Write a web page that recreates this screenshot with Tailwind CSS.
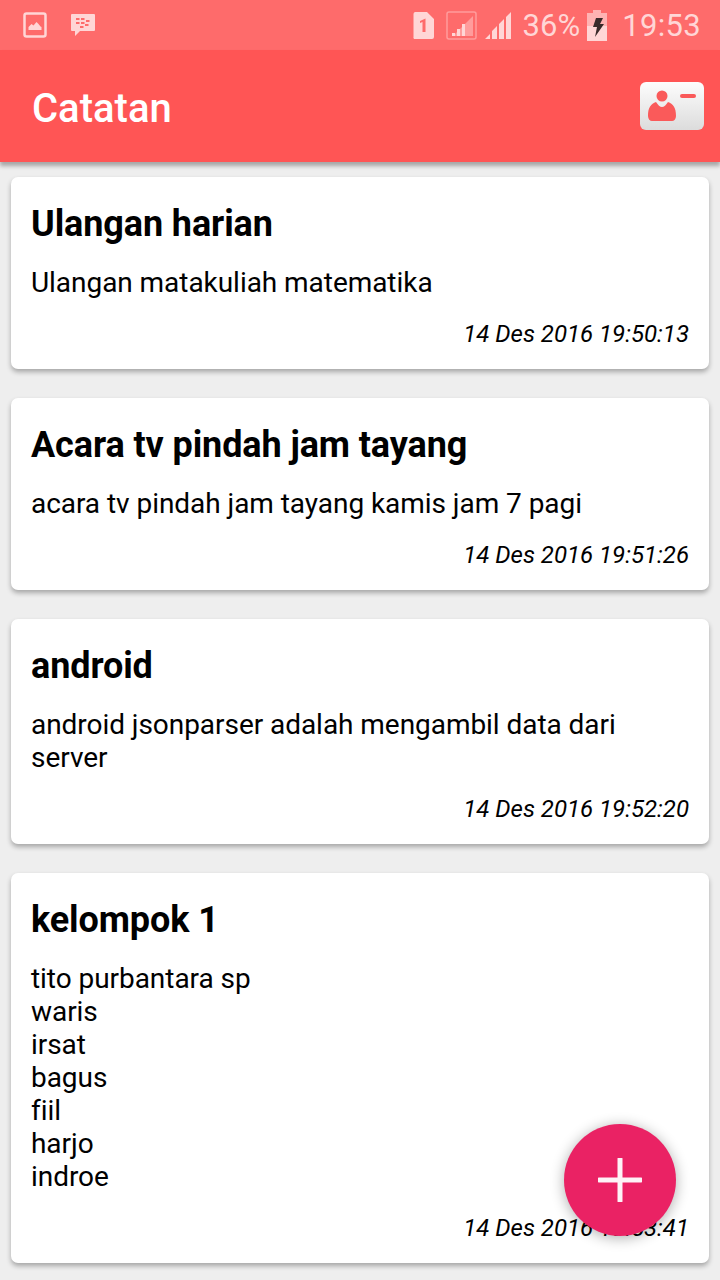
<!DOCTYPE html>
<html><head><meta charset="utf-8">
<script src="https://cdn.jsdelivr.net/npm/@tailwindcss/browser@4"></script>
</head>
<body class="m-0">
<div class="relative w-[720px] h-[1280px] overflow-hidden bg-[#eeeeee] font-['Roboto',sans-serif]">
  <div class="relative z-10 flex h-[50px] items-center bg-[#fe6b6b] text-[#ffd6d6]">
    <svg class="ml-[23px]" width="25" height="26" viewBox="0 0 25 26"><rect x="1.5" y="1.5" width="21" height="23" rx="2" fill="none" stroke="#ffd6d6" stroke-width="2.5"/><path d="M5.5 18v-3l3-3 2 1.500 3-3.500 2 2 2 2.500 1 0.500v3z" fill="#ffd6d6"/></svg>
    <svg class="ml-[22px]" width="25" height="23" viewBox="0 0 25 23"><path d="M2 0h22a1 1 0 0 1 1 1v15a1 1 0 0 1-1 1H10l-5 5v-5H2a1 1 0 0 1-1-1V1a1 1 0 0 1 1-1z" fill="#ffd6d6"/><g fill="#fe6b6b"><rect x="6" y="4" width="3.500" height="2"/><rect x="11" y="4" width="3.500" height="2"/><rect x="6" y="8" width="3.500" height="2"/><rect x="11" y="8" width="3.500" height="2"/><rect x="16" y="6" width="3.500" height="2"/><rect x="15" y="10" width="3.500" height="2"/><rect x="10" y="12" width="3.500" height="2"/></g></svg>
    <div class="ml-auto flex items-center">
      <svg width="22" height="27" viewBox="0 0 22 27"><path d="M2 0h12l7 7v18a2 2 0 0 1-2 2H2a1.500 1.500 0 0 1-1.500-2V2A2 2 0 0 1 2 0z" fill="#ffd6d6"/><path d="M7 9l5.500-2.500V20H9.500V10l-2.500 1z" fill="#fe6b6b"/></svg>
      <svg class="ml-[11px]" width="31" height="29" viewBox="0 0 31 29"><rect x="1" y="1" width="29" height="27" rx="2" fill="none" stroke="#ff9c9c" stroke-width="1.500"/><path d="M27 5v20H7z" fill="#ff9c9c"/><path d="M6 25h3v-3H6zM11 25h3v-7h-3zM16 25h3V13h-3z" fill="#ffd6d6"/></svg>
      <svg class="ml-[8px]" width="27" height="28" viewBox="0 0 27 28"><path d="M0 28l5-5v5zM7 28v-8l5-5v13zM14 28V13l5-5v20zM21 28V6l5-5v27z" fill="#ffd6d6"/></svg>
      <span class="ml-[10px] pt-[1px] text-[31px] leading-[50px] tracking-[0.1px]">36%</span>
      <svg class="ml-[7px]" width="20" height="31" viewBox="0 0 20 31"><path d="M6 0h8v3h6v13H0V3h6z" fill="#ffb3b3"/><rect y="16" width="20" height="15" fill="#ffd6d6"/><path d="M9 8h7l-3 6h4l-9 13 2-10H6z" fill="#3a2a2a"/></svg>
      <span class="ml-[15px] mr-[19px] pt-[1px] text-[31px] leading-[50px] tracking-[0.3px]">19:53</span>
    </div>
  </div>
  <div class="relative z-10 flex h-[112px] items-center justify-between bg-[#ff5555] pl-[32px] pr-[16px] shadow-[0_4px_4px_rgba(0,0,0,0.3)]">
    <span class="pt-[5px] text-[40px] font-medium leading-none text-white">Catatan</span>
    <svg class="blur-[0.6px]" width="64" height="48" viewBox="0 0 64 48">
      <defs><linearGradient id="g" x1="0" y1="0" x2="0" y2="1"><stop offset="0" stop-color="#fdfdfd"/><stop offset="1" stop-color="#dcdcdc"/></linearGradient></defs>
      <rect width="64" height="48" rx="6" fill="url(#g)"/>
      <circle cx="22" cy="14" r="5.500" fill="#fa5a5a"/>
      <path d="M8 34c0-9 3-12 8-14 2 3 4 5 6 5s4-2 6-5c5 2 8 5 8 14 0 3-2 5-4 5H12c-2 0-4-2-4-5z" fill="#fa5a5a"/>
      <rect x="40" y="12" width="16" height="4" rx="2" fill="#fa5a5a"/>
    </svg>
  </div>

  <div class="mx-[11px] mt-[15px] flex flex-col gap-[29px] text-black">
    <div class="rounded-[7px] bg-white px-[20px] pb-[21px] pt-[27px] shadow-[0_3px_5px_rgba(0,0,0,0.3)]">
      <div class="text-[36px] font-bold leading-[40px] tracking-[-0.1px]">Ulangan harian</div>
      <div class="mt-[22px] text-[28px] leading-[33px] tracking-[-0.05px]">Ulangan matakuliah matematika</div>
      <div class="mt-[21px] text-right text-[24px] italic leading-[28px]">14 Des 2016 19:50:13</div>
    </div>
    <div class="rounded-[7px] bg-white px-[20px] pb-[21px] pt-[27px] shadow-[0_3px_5px_rgba(0,0,0,0.3)]">
      <div class="text-[36px] font-bold leading-[40px] tracking-[-0.1px]">Acara tv pindah jam tayang</div>
      <div class="mt-[22px] text-[28px] leading-[33px] tracking-[-0.05px]">acara tv pindah jam tayang kamis jam 7 pagi</div>
      <div class="mt-[21px] text-right text-[24px] italic leading-[28px]">14 Des 2016 19:51:26</div>
    </div>
    <div class="rounded-[7px] bg-white px-[20px] pb-[21px] pt-[27px] shadow-[0_3px_5px_rgba(0,0,0,0.3)]">
      <div class="text-[36px] font-bold leading-[40px] tracking-[-0.1px]">android</div>
      <div class="mt-[22px] text-[28px] leading-[33px] tracking-[-0.05px]">android jsonparser adalah mengambil data dari<br>server</div>
      <div class="mt-[21px] text-right text-[24px] italic leading-[28px]">14 Des 2016 19:52:20</div>
    </div>
    <div class="rounded-[7px] bg-white px-[20px] pb-[21px] pt-[27px] shadow-[0_3px_5px_rgba(0,0,0,0.3)]">
      <div class="text-[36px] font-bold leading-[40px] tracking-[-0.1px]">kelompok 1</div>
      <div class="mt-[22px] text-[28px] leading-[33px] tracking-[-0.05px]">tito purbantara sp<br>waris<br>irsat<br>bagus<br>fiil<br>harjo<br>indroe</div>
      <div class="mt-[21px] text-right text-[24px] italic leading-[28px]">14 Des 2016 19:53:41</div>
    </div>
  </div>

  <div class="absolute left-[564px] top-[1124px] flex h-[112px] w-[112px] items-center justify-center rounded-full bg-[#ea2264] shadow-[0_2px_14px_rgba(0,0,0,0.32)]">
    <svg class="blur-[0.5px]" width="44" height="44" viewBox="0 0 44 44"><path d="M22 1v42M1 22h42" stroke="#fff" stroke-width="5" stroke-linecap="round" opacity="0.95"/></svg>
  </div>
</div>
</body></html>
